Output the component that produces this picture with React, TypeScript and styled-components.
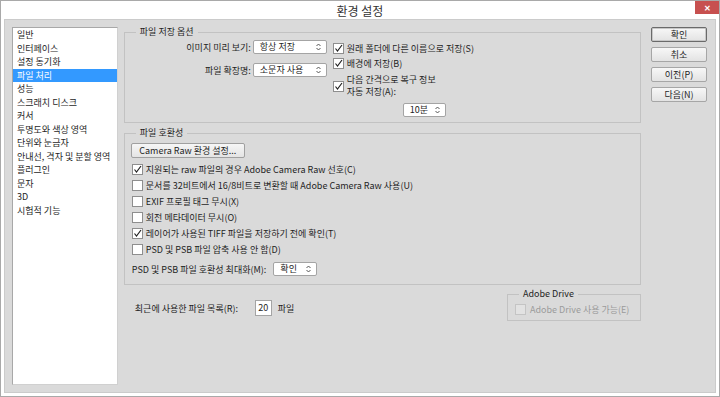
import React from 'react'
import styled, {createGlobalStyle} from 'styled-components'

const GlobalStyle = createGlobalStyle`
  html, body {
    margin: 0;
    padding: 0;
    overflow: hidden;
    background: #ffffff;
  }
  body {
    font-family: "Noto Sans CJK KR", "Noto Sans", sans-serif;
    font-size: 9px;
    color: #1e1e1e;
  }
`

const categories = [
  '일반',
  '인터페이스',
  '설정 동기화',
  '파일 처리',
  '성능',
  '스크래치 디스크',
  '커서',
  '투명도와 색상 영역',
  '단위와 눈금자',
  '안내선, 격자 및 분할 영역',
  '플러그인',
  '문자',
  '3D',
  '시험적 기능',
]

const compatOptions = [
  {label: '지원되는 raw 파일의 경우 Adobe Camera Raw 선호(C)', checked: true},
  {label: '문서를 32비트에서 16/8비트로 변환할 때 Adobe Camera Raw 사용(U)', checked: false},
  {label: 'EXIF 프로필 태그 무시(X)', checked: false},
  {label: '회전 메타데이터 무시(O)', checked: false},
  {label: '레이어가 사용된 TIFF 파일을 저장하기 전에 확인(T)', checked: true},
  {label: 'PSD 및 PSB 파일 압축 사용 안 함(D)', checked: false},
]

type CheckProps = {
  checked?: boolean
  disabled?: boolean
}

const Check: React.FC<CheckProps> = ({checked, disabled}) => (
  <CheckBox $disabled={disabled}>
    {checked && (
      <svg width="9" height="9" viewBox="0 0 9 9">
        <path d="M1.5 4.5 L3.5 7 L8 1" fill="none" stroke="#222" strokeWidth="1.2" />
      </svg>
    )}
  </CheckBox>
)

type SelectProps = {
  value: string
  width: number
}

const Select: React.FC<SelectProps> = ({value, width}) => (
  <SelectBox style={{width}}>
    <span>{value}</span>
    <svg width="5" height="8" viewBox="0 0 5 8">
      <path d="M0.5 3 L2.5 1 L4.5 3 M0.5 5 L2.5 7 L4.5 5" fill="none" stroke="#444" strokeWidth="0.9" />
    </svg>
  </SelectBox>
)

const App: React.FC = () => {
  return (
    <Window>
      <GlobalStyle />
      <TitleBar>
        <span />
        <Title>환경 설정</Title>
        <CloseButton>✕</CloseButton>
      </TitleBar>
      <Body>
        <CategoryList>
          {categories.map((c) => (
            <CategoryItem key={c} $selected={c === '파일 처리'}>
              {c}
            </CategoryItem>
          ))}
        </CategoryList>

        <Main>
          <Group $after={3}>
            <Legend>파일 저장 옵션</Legend>
            <SaveOptions>
              <FieldGrid>
                <FieldLabel>이미지 미리 보기:</FieldLabel>
                <Select value="항상 저장" width={74} />
                <FieldLabel>파일 확장명:</FieldLabel>
                <Select value="소문자 사용" width={74} />
              </FieldGrid>
              <CheckColumn>
                <CheckRow>
                  <Check checked />
                  <span>원래 폴더에 다른 이름으로 저장(S)</span>
                </CheckRow>
                <CheckRow>
                  <Check checked />
                  <span>배경에 저장(B)</span>
                </CheckRow>
                <CheckRow $top={2}>
                  <Check checked />
                  <TwoLines>
                    다음 간격으로 복구 정보
                    <br />
                    자동 저장(A):
                  </TwoLines>
                </CheckRow>
                <IntervalRow>
                  <Select value="10분" width={43} />
                </IntervalRow>
              </CheckColumn>
            </SaveOptions>
          </Group>

          <Group $after={2}>
            <Legend>파일 호환성</Legend>
            <CompatBody>
              <PushButton>Camera Raw 환경 설정...</PushButton>
              <CompatList>
                {compatOptions.map((o) => (
                  <CompatRow key={o.label}>
                    <Check checked={o.checked} />
                    <span>{o.label}</span>
                  </CompatRow>
                ))}
              </CompatList>
              <MaxRow>
                <span>PSD 및 PSB 파일 호환성 최대화(M):</span>
                <Select value="확인" width={44} />
              </MaxRow>
            </CompatBody>
          </Group>

          <BottomRow>
            <RecentRow>
              <RecentLabel>최근에 사용한 파일 목록(R):</RecentLabel>
              <NumberInput>20</NumberInput>
              <span>파일</span>
            </RecentRow>
            <DriveGroup>
              <Legend>Adobe Drive</Legend>
              <DriveRow>
                <Check disabled />
                <span>Adobe Drive 사용 가능(E)</span>
              </DriveRow>
            </DriveGroup>
          </BottomRow>
        </Main>

        <ButtonColumn>
          <DialogButton $default>확인</DialogButton>
          <DialogButton>취소</DialogButton>
          <DialogButton>이전(P)</DialogButton>
          <DialogButton>다음(N)</DialogButton>
        </ButtonColumn>
      </Body>
    </Window>
  )
}
export default App

const Window = styled.div`
  box-sizing: border-box;
  width: 720px;
  height: 397px;
  border: 1px solid #a9a9a9;
  background: #ffffff;
  display: flex;
  flex-direction: column;
`

const TitleBar = styled.div`
  height: 18px;
  display: grid;
  grid-template-columns: 1fr auto 1fr;
  align-items: start;
`

const Title = styled.div`
  font-size: 12px;
  color: #333;
  line-height: 18px;
  padding-top: 1px;
`

const CloseButton = styled.div`
  justify-self: end;
  width: 24px;
  height: 13px;
  background: #c7504f;
  color: #ffffff;
  font-size: 8px;
  font-weight: bold;
  line-height: 13px;
  text-align: center;
`

const Body = styled.div`
  flex: 1;
  margin: 0 3px 3px 3px;
  background: #dadada;
  border: 1px solid #cbcbcb;
  display: flex;
  padding: 7px 8px 7px 7px;
  gap: 6px;
`

const CategoryList = styled.div`
  box-sizing: border-box;
  width: 106px;
  background: #ffffff;
  border: 1px solid #a8a8a8;
  border-right-color: #d0d0d0;
  border-bottom-color: #d0d0d0;
  display: flex;
  flex-direction: column;
`

const CategoryItem = styled.div<{$selected?: boolean}>`
  height: 13.5px;
  line-height: 13.5px;
  padding-left: 4px;
  white-space: nowrap;
  background: ${(p) => (p.$selected ? '#3399ff' : 'transparent')};
  color: ${(p) => (p.$selected ? '#ffffff' : '#1e1e1e')};
`

const Main = styled.div`
  width: 518px;
  display: flex;
  flex-direction: column;
  margin-top: -2px;
`

const Group = styled.fieldset<{$after?: number}>`
  margin: 0 0 ${(p) => p.$after ?? 0}px 0;
  padding: 0;
  border: 1px solid #c2c2c2;
  min-width: 0;
`

const Legend = styled.legend`
  margin-left: 11px;
  padding: 0 4px;
  line-height: 14px;
  color: #1e1e1e;
`

const SaveOptions = styled.div`
  display: flex;
  gap: 6px;
  padding: 1px 0 5px 0;
`

const FieldGrid = styled.div`
  display: grid;
  grid-template-columns: 126px 74px;
  column-gap: 2px;
  row-gap: 9px;
  align-items: center;
  align-content: start;
`

const FieldLabel = styled.div`
  text-align: right;
`

const SelectBox = styled.div`
  box-sizing: border-box;
  height: 14px;
  background: #ffffff;
  border: 1px solid #a4a4a4;
  border-radius: 2px;
  display: flex;
  align-items: center;
  justify-content: space-between;
  padding: 0 5px 0 6px;
  line-height: 12px;
`

const CheckColumn = styled.div`
  display: flex;
  flex-direction: column;
  padding-top: 1px;
`

const CheckBox = styled.span<{$disabled?: boolean}>`
  box-sizing: border-box;
  flex: none;
  width: 11px;
  height: 11px;
  background: ${(p) => (p.$disabled ? '#e2e2e2' : '#ffffff')};
  border: 1px solid ${(p) => (p.$disabled ? '#c4c4c4' : '#8e8e8e')};
  display: flex;
  align-items: center;
  justify-content: center;
`

const CheckRow = styled.div<{$top?: number}>`
  display: flex;
  align-items: center;
  gap: 3px;
  min-height: 15px;
  margin-top: ${(p) => p.$top ?? 0}px;
`

const TwoLines = styled.span`
  line-height: 12px;
  padding: 1px 0;
`

const IntervalRow = styled.div`
  padding: 4px 0 0 70px;
`

const CompatBody = styled.div`
  padding: 3px 0 8px 6px;
`

const PushButton = styled.div`
  box-sizing: border-box;
  display: inline-block;
  width: 114px;
  height: 15px;
  line-height: 13px;
  text-align: center;
  border: 1px solid #a0a0a0;
  border-radius: 2px;
  background: linear-gradient(#f6f6f6, #e4e4e4);
`

const CompatList = styled.div`
  display: flex;
  flex-direction: column;
  padding-top: 3px;
`

const CompatRow = styled.div`
  display: flex;
  align-items: center;
  gap: 3px;
  height: 16px;
  padding-left: 1px;
`

const MaxRow = styled.div`
  display: flex;
  align-items: center;
  gap: 7px;
  margin-top: 5px;
  height: 14px;
  padding-left: 1px;
`

const BottomRow = styled.div`
  display: flex;
  justify-content: space-between;
  align-items: flex-start;
`

const RecentRow = styled.div`
  display: flex;
  align-items: center;
  gap: 6px;
  padding: 13px 0 0 11px;
`

const RecentLabel = styled.span`
  width: 114px;
`

const NumberInput = styled.div`
  box-sizing: border-box;
  width: 17px;
  height: 16px;
  line-height: 14px;
  background: #ffffff;
  border: 1px solid #a4a4a4;
  text-align: center;
`

const DriveGroup = styled(Group)`
  width: 134px;
  box-sizing: border-box;
  margin: 0;
`

const DriveRow = styled.div`
  display: flex;
  align-items: center;
  gap: 4px;
  padding: 2px 0 4px 7px;
  color: #9a9a9a;
`

const ButtonColumn = styled.div`
  display: flex;
  flex-direction: column;
  gap: 5px;
  padding-left: 4px;
`

const DialogButton = styled.div<{$default?: boolean}>`
  box-sizing: border-box;
  width: 56px;
  height: 15px;
  line-height: 13px;
  text-align: center;
  border: 1px solid ${(p) => (p.$default ? '#6a6a6a' : '#a6a6a6')};
  box-shadow: ${(p) => (p.$default ? 'inset 0 0 0 1px #c8c8c8' : 'none')};
  border-radius: 2px;
  background: linear-gradient(#f7f7f7, #e3e3e3);
`
